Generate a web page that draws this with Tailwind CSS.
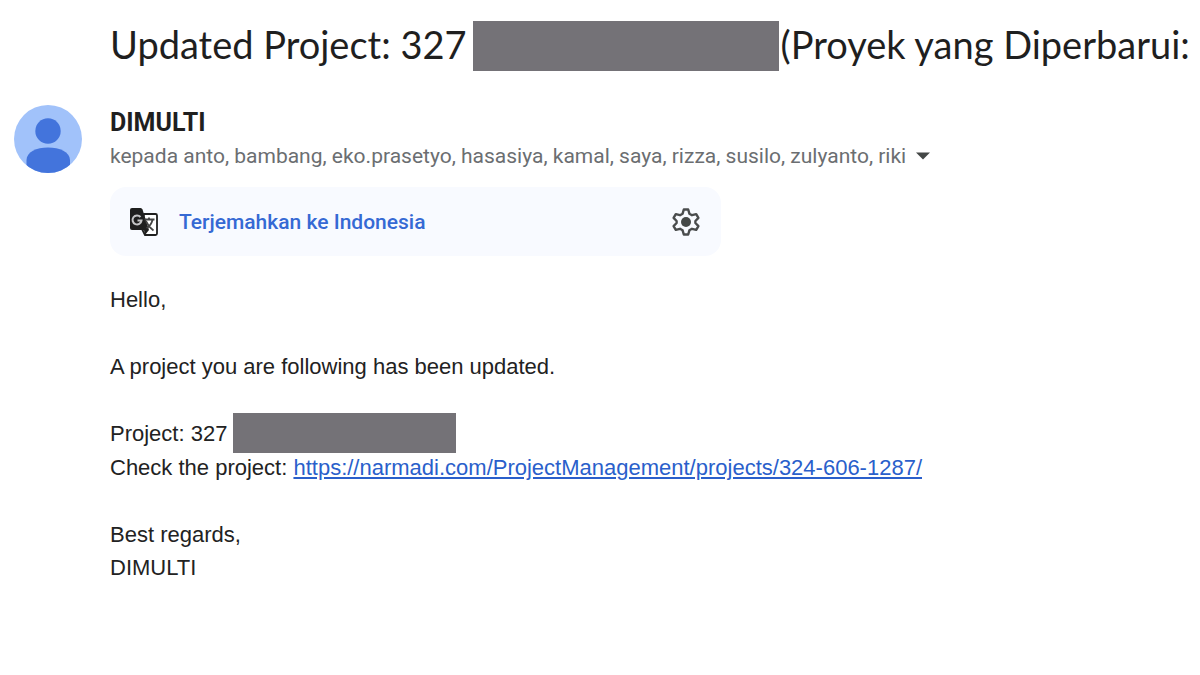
<!DOCTYPE html>
<html lang="id">
<head>
  <meta charset="UTF-8" />
  <meta name="viewport" content="width=device-width, initial-scale=1.0"/>
  <title>Updated Project: 327</title>
  <script src="https://cdn.jsdelivr.net/npm/@tailwindcss/browser@4"></script>
</head>
<body class="bg-white min-h-screen overflow-x-hidden font-['Liberation_Sans',sans-serif] text-[#222222]">
  <header class="pl-[110px] pt-[21px] whitespace-nowrap">
    <h1 class="flex items-start gap-1.5 font-['Lato',sans-serif] text-[38px] leading-[46px] text-[#1f1f1f]">
      <span>Updated Project: 327</span>
      <span class="flex items-start gap-0.5">
        <span class="w-[306px] h-[50px] bg-[#747277]"></span>
        <span>(Proyek yang Diperbarui:</span>
      </span>
    </h1>
  </header>

  <main class="flex items-start gap-7 pl-3.5 pt-[33px]">
    <svg class="w-[68px] h-[70px] shrink-0" viewBox="0 0 68 70" role="img" aria-label="DIMULTI">
      <defs>
        <clipPath id="avatar"><circle cx="34" cy="35" r="34"/></clipPath>
      </defs>
      <g clip-path="url(#avatar)">
        <rect width="68" height="70" fill="#a1c2fa"/>
        <circle cx="34" cy="27" r="12.700" fill="#4374dc"/>
        <path d="M12.500 70V56c0-8 10-12.500 21.500-12.500S56 48 56 56v14z" fill="#4374dc"/>
      </g>
    </svg>

    <div class="grow min-w-0">
      <h2 class="font-['Roboto',sans-serif] font-bold text-[25px] leading-[38px] text-[#1f1f1f]">DIMULTI</h2>
      <div class="flex items-center gap-2.5 font-['Roboto',sans-serif] text-[21px] leading-7 text-[#6b6e71] whitespace-nowrap">
        <span>kepada anto, bambang, eko.prasetyo, hasasiya, kamal, saya, rizza, susilo, zulyanto, riki</span>
        <button aria-label="Tampilkan detail">
          <svg class="w-3.5 h-2" viewBox="0 0 14 8" fill="#444746"><path d="M0 0.500h14L7 7.500z"/></svg>
        </button>
      </div>

      <div class="flex items-center mt-[17px] max-w-[611px] h-[69px] rounded-2xl bg-[#f8faff] px-5">
        <svg class="w-7 h-7 shrink-0" viewBox="0 0 28 28">
          <path d="M14 6h11.500q1.500 0 1.500 1.500v18q0 1.500-1.500 1.500H15l-3-6z" fill="#fff" stroke="#1f1f1f" stroke-width="1.800"/>
          <path d="M2 0h8.500q1.500 0 2 1.500L19 22H2q-2 0-2-2V2q0-2 2-2z" fill="#1f1f1f"/>
          <path d="M10.500 9A4.500 4.500 0 1 0 11.500 12.500H7.500" fill="none" stroke="#c4c4c6" stroke-width="2"/>
          <path d="M14.500 11.500h10M19 9.500v2M22.500 12c-1 4-3 6.500-6 8M16 13c1.500 3.500 4 7 7.500 9.500" fill="none" stroke="#444" stroke-width="1.800"/>
          <path d="M14 22h5l-4 5z" fill="#1f1f1f"/>
        </svg>
        <button class="ml-[21px] font-['Roboto',sans-serif] font-medium text-[21px] leading-8 text-[#3569d4] whitespace-nowrap">Terjemahkan ke Indonesia</button>
        <button class="ml-auto" aria-label="Setelan">
          <svg class="w-[30px] h-[30px]" viewBox="0 0 30 30" fill="none">
            <path d="M12.800 2.500h4.400l1.200 4.200 2.600 1.500 4.200-1.100 2.200 3.800-3 3.100v2l3 3.100-2.200 3.800-4.200-1.100-2.600 1.500-1.200 4.200h-4.400l-1.200-4.200L9 21.800l-4.200 1.100-2.200-3.800 3-3.100v-2l-3-3.100 2.200-3.800L9 8.200l2.600-1.500z" stroke="#4a4c4d" stroke-width="2.400" stroke-linejoin="round"/>
            <circle cx="15" cy="15" r="5" fill="#444746"/>
          </svg>
        </button>
      </div>

      <div class="flex flex-col gap-[34px] mt-[27px] text-[22px] leading-[33px]">
        <p>Hello,</p>
        <p>A project you are following has been updated.</p>
        <div>
          <p class="flex items-center gap-1.5 h-8 mb-0.5">
            <span>Project: 327</span>
            <span class="w-[223px] h-10 bg-[#747277]"></span>
          </p>
          <p>Check the project: <a href="https://narmadi.com/ProjectManagement/projects/324-606-1287/" class="text-[#2a5fcb] underline">https://narmadi.com/ProjectManagement/projects/324-606-1287/</a></p>
        </div>
        <p>Best regards,<br>DIMULTI</p>
      </div>
    </div>
  </main>
</body>
</html>
